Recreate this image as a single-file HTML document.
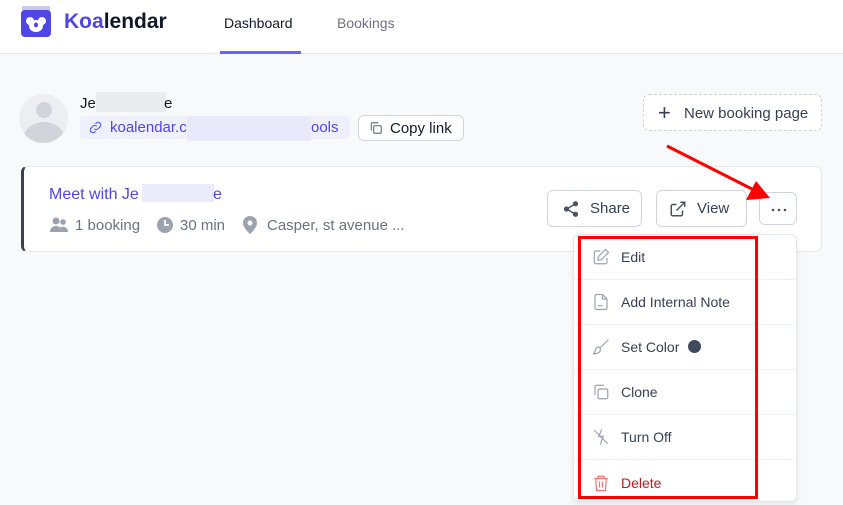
<!DOCTYPE html>
<html><head><style>
*{box-sizing:border-box;margin:0;padding:0}
body{width:843px;height:505px;overflow:hidden;background:#f8f9fb;font-family:"Liberation Sans",sans-serif;position:relative;color:#1f2937}
.a{position:absolute}
.hdr{left:0;top:0;width:843px;height:54px;background:#fff;border-bottom:1px solid #e5e7eb}
.btn{position:absolute;background:#fff;border:1px solid #d1d5db;border-radius:6px;font-size:15px;color:#374151;display:flex;align-items:center}
.mi{position:absolute;left:0;width:224px;height:45px;border-bottom:1px solid #f0f1f3;display:flex;align-items:center;font-size:14px;color:#374151}
.mi svg{position:absolute;left:18px}
.mi>span{position:absolute;left:47px}
</style></head><body>
<div class="a hdr"></div>
<svg class="a" style="left:20px;top:5px" width="32" height="33" viewBox="0 0 32 33"><rect x="2" y="1" width="28" height="5" rx="1" fill="#c7c9f0"/><rect x="1" y="5" width="30" height="27" rx="4" fill="#5046e5"/><circle cx="10" cy="16" r="4" fill="#fff"/><circle cx="22" cy="16" r="4" fill="#fff"/><ellipse cx="16" cy="21" rx="7" ry="6" fill="#fff"/><ellipse cx="16" cy="20" rx="2" ry="2.5" fill="#5046e5"/></svg>
<div class="a" style="left:64px;top:10px;font-size:21px;font-weight:bold;color:#111827"><span style="color:#4f46e5">Koa</span>lendar</div>
<div class="a" style="left:224px;top:15px;font-size:14px;color:#111827">Dashboard</div>
<div class="a" style="left:220px;top:51px;width:81px;height:3px;background:#6366f1"></div>
<div class="a" style="left:337px;top:15px;font-size:14px;color:#6b7280">Bookings</div>

<div class="a" style="left:19px;top:94px;width:49px;height:49px;border-radius:50%;background:#eceef1;overflow:hidden"><div class="a" style="left:17px;top:8px;width:16px;height:16px;border-radius:50%;background:#d1d5db"></div><div class="a" style="left:5px;top:28px;width:40px;height:30px;border-radius:50%;background:#d1d5db"></div></div>
<div class="a" style="left:80px;top:95px;font-size:15px;color:#111827">Je</div>
<div class="a" style="left:96px;top:92px;width:70px;height:20px;background:#e9ebee"></div>
<div class="a" style="left:164px;top:95px;font-size:15px;color:#111827">e</div>
<div class="a" style="left:80px;top:116px;width:270px;height:23px;border-radius:4px;background:#eef0fd"></div>
<svg class="a" style="left:88px;top:120px" width="15" height="15" viewBox="0 0 24 24" fill="none" stroke="#6366f1" stroke-width="2"><path d="M10 14a4 4 0 0 0 6 0l3-3a4 4 0 0 0-6-6l-1 1M14 10a4 4 0 0 0-6 0l-3 3a4 4 0 0 0 6 6l1-1"/></svg>
<div class="a" style="left:110px;top:119px;font-size:15px;color:#4f46e5">koalendar.c</div>
<div class="a" style="left:187px;top:116px;width:124px;height:25px;background:#e9e9fc"></div>
<div class="a" style="left:311px;top:119px;font-size:15px;color:#4f46e5">ools</div>
<div class="btn" style="left:358px;top:115px;width:106px;height:26px"><svg style="margin-left:10px" width="14" height="14" viewBox="0 0 24 24" fill="none" stroke="#6b7280" stroke-width="2"><rect x="8" y="8" width="13" height="13" rx="2"/><path d="M4 16V5a2 2 0 0 1 2-2h10"/></svg><span style="margin-left:7px;color:#111827">Copy link</span></div>
<div class="a" style="left:643px;top:94px;width:179px;height:37px;border:1px dashed #cfd3d9;border-radius:6px;background:#fff;font-size:15px;color:#374151"><span class="a" style="left:14px;top:5px;font-size:22px;font-weight:300">+</span><span class="a" style="left:40px;top:10px">New booking page</span></div>

<div class="a" style="left:21px;top:166px;width:801px;height:86px;background:#fff;border:1px solid #e5e7eb;border-left:3px solid #374151;border-radius:6px"></div>
<div class="a" style="left:49px;top:186px;font-size:16px;color:#4f46e5">Meet with Je</div>
<div class="a" style="left:142px;top:184px;width:72px;height:18px;background:#ecebfc"></div>
<div class="a" style="left:213px;top:186px;font-size:16px;color:#4f46e5">e</div>
<svg class="a" style="left:50px;top:217px" width="18" height="16" viewBox="0 0 18 16" fill="#9ca3af"><circle cx="6" cy="4" r="3.5"/><circle cx="13" cy="5" r="2.8"/><path d="M0 15c0-4 3-6 6-6s6 2 6 6zM12 15c0-3-1-4-2-5 3-1 8 0 8 5z"/></svg>
<div class="a" style="left:75px;top:217px;font-size:15px;color:#6b7280">1 booking</div>
<svg class="a" style="left:156px;top:216px" width="18" height="18" viewBox="0 0 18 18"><circle cx="9" cy="9" r="8" fill="#9ca3af"/><path d="M9 4v5h4" stroke="#fff" stroke-width="1.8" fill="none"/></svg>
<div class="a" style="left:180px;top:217px;font-size:15px;color:#6b7280">30 min</div>
<svg class="a" style="left:243px;top:216px" width="14" height="18" viewBox="0 0 14 18"><path d="M7 0a7 7 0 0 0-7 7c0 5 7 11 7 11s7-6 7-11a7 7 0 0 0-7-7z" fill="#9ca3af"/><circle cx="7" cy="7" r="2.5" fill="#fff"/></svg>
<div class="a" style="left:267px;top:217px;font-size:15px;color:#6b7280">Casper, st avenue ...</div>

<div class="btn" style="left:547px;top:190px;width:95px;height:37px"><svg style="margin-left:14px" width="18" height="18" viewBox="0 0 24 24" fill="#4b5563" stroke="#4b5563" stroke-width="2"><circle cx="18" cy="5" r="2.5"/><circle cx="6" cy="12" r="2.5"/><circle cx="18" cy="19" r="2.5"/><path d="M8 11l8-5M8 13l8 5" fill="none"/></svg><span style="margin-left:10px">Share</span></div>
<div class="btn" style="left:656px;top:190px;width:91px;height:37px"><svg style="margin-left:12px" width="18" height="18" viewBox="0 0 24 24" fill="none" stroke="#4b5563" stroke-width="2"><path d="M18 14v5a2 2 0 0 1-2 2H5a2 2 0 0 1-2-2V8a2 2 0 0 1 2-2h5M15 3h6v6M10 14L21 3"/></svg><span style="margin-left:10px">View</span></div>
<div class="btn" style="left:759px;top:192px;width:38px;height:33px"><svg class="a" style="left:10px;top:15px" width="18" height="4"><circle cx="3" cy="2" r="1.3" fill="#4b5563"/><circle cx="9" cy="2" r="1.3" fill="#4b5563"/><circle cx="15" cy="2" r="1.3" fill="#4b5563"/></svg></div>

<svg class="a" style="left:0;top:0" width="843" height="505"><line x1="667" y1="146" x2="752" y2="189" stroke="#f00" stroke-width="3"/><polygon points="770,198 746,200 756,181" fill="#f00"/></svg>

<div class="a" style="left:573px;top:234px;width:224px;height:268px;background:#fff;border:1px solid #e5e7eb;border-radius:6px;box-shadow:0 2px 6px rgba(0,0,0,.08)">
<div class="mi" style="top:0"><svg width="18" height="18" viewBox="0 0 24 24" fill="none" stroke="#9ca3af" stroke-width="1.6"><path d="M11 4H5a2 2 0 0 0-2 2v13a2 2 0 0 0 2 2h13a2 2 0 0 0 2-2v-6"/><path d="M18 2l4 4-10 10H8v-4z"/></svg><span>Edit</span></div>
<div class="mi" style="top:45px"><svg width="18" height="18" viewBox="0 0 24 24" fill="none" stroke="#9ca3af" stroke-width="1.6"><path d="M14 2H6a2 2 0 0 0-2 2v16a2 2 0 0 0 2 2h12a2 2 0 0 0 2-2V8z"/><path d="M14 2v6h6M8 17h6"/></svg><span>Add Internal Note</span></div>
<div class="mi" style="top:90px"><svg width="18" height="18" viewBox="0 0 24 24" fill="none" stroke="#9ca3af" stroke-width="1.6"><path d="M22 2L11 13M11 13l-3-1c-3 0-3 3-4 6l-2 3c4 0 8-1 9-4z"/></svg><span>Set Color <i style="display:inline-block;width:13px;height:13px;border-radius:50%;background:#3f4a5e;margin-left:5px;vertical-align:-1px"></i></span></div>
<div class="mi" style="top:135px"><svg width="18" height="18" viewBox="0 0 24 24" fill="none" stroke="#9ca3af" stroke-width="1.6"><rect x="8" y="8" width="13" height="13" rx="2"/><path d="M4 16V5a2 2 0 0 1 2-2h10"/></svg><span>Clone</span></div>
<div class="mi" style="top:180px"><svg width="18" height="18" viewBox="0 0 24 24" fill="none" stroke="#9ca3af" stroke-width="1.6"><path d="M13 2L9 11h6l-4 11M3 3l18 18"/></svg><span>Turn Off</span></div>
<div class="mi" style="top:225px;border:none;color:#b91c1c"><svg width="18" height="20" viewBox="0 0 24 24" fill="none" stroke="#f87171" stroke-width="1.6"><path d="M3 6h18M8 6V3h8v3M5 6l1 16h12l1-16M10 10v8M14 10v8"/></svg><span>Delete</span></div>
</div>
<div class="a" style="left:578px;top:236px;width:180px;height:263px;border:3px solid #f00"></div>
</body></html>
